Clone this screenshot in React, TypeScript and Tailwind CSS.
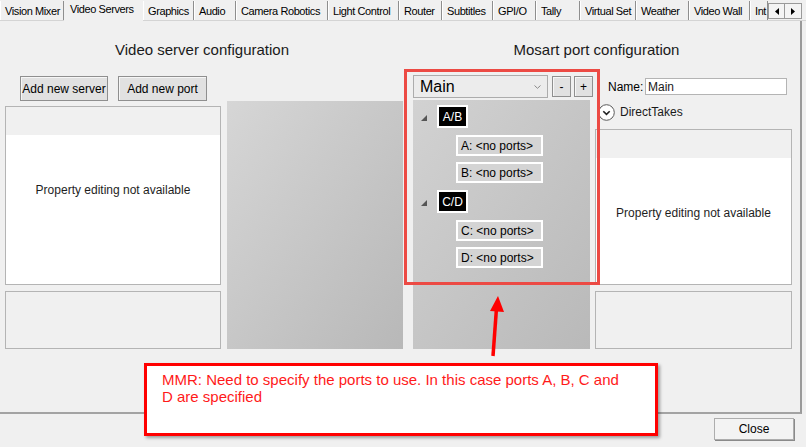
import React from 'react';

const TABS: { label: string; w: number }[] = [
  { label: 'Vision Mixer', w: 64 },
  { label: 'Video Servers', w: 79 },
  { label: 'Graphics', w: 51 },
  { label: 'Audio', w: 42 },
  { label: 'Camera Robotics', w: 92 },
  { label: 'Light Control', w: 71 },
  { label: 'Router', w: 43 },
  { label: 'Subtitles', w: 51 },
  { label: 'GPI/O', w: 43 },
  { label: 'Tally', w: 44 },
  { label: 'Virtual Set', w: 56 },
  { label: 'Weather', w: 53 },
  { label: 'Video Wall', w: 61 },
  { label: 'Int', w: 18 },
];

function TabStrip() {
  return (
    <div className="relative flex h-[21px] items-end border-b border-[#d4d4d4]">
      {TABS.map((t) => {
        const selected = t.label === 'Video Servers';
        return (
          <div
            key={t.label}
            style={{ width: t.w }}
            className={
              selected
                ? 'relative z-10 -mb-px h-[22px] shrink-0 overflow-hidden whitespace-nowrap bg-[#f0f0f0] pl-[6px] pt-[3px] text-[11px] leading-[14px] tracking-[-0.4px] text-black'
                : 'h-[19px] shrink-0 overflow-hidden whitespace-nowrap border-r border-r-[#8e8e8e] border-l border-l-white bg-[#f0f0f0] pl-[4px] pt-[3px] text-[11px] leading-[14px] tracking-[-0.4px] text-black'
            }
          >
            {t.label}
          </div>
        );
      })}
      <div className="mb-[1px] flex h-[16px]">
        <div className="flex w-[17px] items-center justify-center border border-[#9a9a9a] bg-[#f4f4f4]">
          <svg width="4" height="7" viewBox="0 0 4 7"><path d="M4 0 L0 3.5 L4 7 Z" fill="#000" /></svg>
        </div>
        <div className="flex w-[17px] items-center justify-center border border-l-0 border-[#9a9a9a] bg-[#f4f4f4]">
          <svg width="4" height="7" viewBox="0 0 4 7"><path d="M0 0 L4 3.5 L0 7 Z" fill="#000" /></svg>
        </div>
      </div>
    </div>
  );
}

function WinButton({ children, className }: { children: React.ReactNode; className: string }) {
  return (
    <div
      className={`flex items-center justify-center border border-[#8f8f8f] bg-[#e1e1e1] text-[12px] text-black shadow-[inset_1px_1px_0_#f6f6f6] ${className}`}
    >
      {children}
    </div>
  );
}

function PropertyBox({ height }: { height: string }) {
  return (
    <div className={`flex flex-col border border-[#b4b4b4] ${height}`}>
      <div className="h-[28px] shrink-0 bg-[#f0f0f0]" />
      <div className="flex-1 bg-white pt-[47px] text-center text-[12px] leading-[16px] text-[#1e1e1e]">
        Property editing not available
      </div>
    </div>
  );
}

function EmptyBox() {
  return <div className="h-[58px] border border-[#b4b4b4] bg-[#f0f0f0]" />;
}

function GroupNode({ label, mt }: { label: string; mt: string }) {
  return (
    <div className={`flex h-[23px] items-center ${mt}`}>
      <svg width="6" height="6" viewBox="0 0 6 6" className="ml-[8px] mt-[2px]">
        <path d="M6 0 L6 6 L0 6 Z" fill="#555" />
      </svg>
      <div className="ml-[10px] flex h-[23px] w-[31px] items-center justify-center border-2 border-white bg-black text-[12px] text-white">
        {label}
      </div>
    </div>
  );
}

function PortNode({ label, mt }: { label: string; mt: string }) {
  return (
    <div
      className={`ml-[43px] flex h-[21px] w-[87px] items-center border-2 border-white bg-[#d4d4d4] pl-[3px] text-[12px] text-black ${mt}`}
    >
      {label}
    </div>
  );
}

export default function App() {
  return (
    <div className="relative h-[447px] w-[806px] overflow-hidden bg-[#f0f0f0] font-['Liberation_Sans',Arial,sans-serif] text-black">
      <TabStrip />

      {/* Tab page */}
      <div className="flex h-[393px] w-[802px] border-b-2 border-r-2 border-b-[#a3a3a3] border-r-[#9a9a9a]">
        {/* Video server configuration */}
        <div className="ml-[5px] flex w-[398px] flex-col">
          <div className="mt-[19px] h-[20px] pr-[4px] text-center text-[15px] leading-[20px] text-[#1a1a1a]">
            Video server configuration
          </div>
          <div className="mt-[16px] flex items-end gap-[6px]">
            <div className="flex w-[216px] flex-col">
              <div className="flex h-[25px] gap-[10px] pl-[15px]">
                <WinButton className="w-[88px]">Add new server</WinButton>
                <WinButton className="w-[89px]">Add new port</WinButton>
              </div>
              <div className="mt-[5px]">
                <PropertyBox height="h-[179px]" />
              </div>
              <div className="mt-[6px]">
                <EmptyBox />
              </div>
            </div>
            <div className="h-[248px] w-[176px] bg-linear-to-br from-[#d6d6d6] to-[#b8b8b8]" />
          </div>
        </div>

        {/* Mosart port configuration */}
        <div className="ml-[2px] flex flex-1 flex-col">
          <div className="mt-[19px] h-[20px] pr-[12px] text-center text-[15px] leading-[20px] text-[#1a1a1a]">
            Mosart port configuration
          </div>
          <div className="mt-[15px] flex pl-[8px]">
            <div className="flex w-[180px] flex-col">
              <div className="flex h-[23px]">
                <div className="flex h-[23px] w-[135px] items-center justify-between border border-[#acacac] bg-[#ececec] pl-[6px] pr-[6px]">
                  <span className="text-[16px] leading-[20px]">Main</span>
                  <svg width="7" height="4" viewBox="0 0 7 4" className="mt-[1px]">
                    <path d="M0.5 0.5 L3.5 3.3 L6.5 0.5" fill="none" stroke="#8a8a8a" strokeWidth="1" />
                  </svg>
                </div>
                <WinButton className="ml-[4px] mt-[1px] h-[21px] w-[19px] text-[11px]">-</WinButton>
                <WinButton className="ml-[3px] mt-[1px] h-[21px] w-[19px] text-[11px]">+</WinButton>
              </div>
              <div className="mt-[2px] h-[249px] w-[177px] bg-linear-to-br from-[#d2d2d2] to-[#b9b9b9] pt-[5px]">
                <GroupNode label="A/B" mt="" />
                <PortNode label="A: <no ports>" mt="mt-[7px]" />
                <PortNode label="B: <no ports>" mt="mt-[6px]" />
                <GroupNode label="C/D" mt="mt-[7px]" />
                <PortNode label="C: <no ports>" mt="mt-[7px]" />
                <PortNode label="D: <no ports>" mt="mt-[6px]" />
              </div>
            </div>

            <div className="ml-[2px] flex w-[197px] flex-col">
              <div className="mt-[3px] flex h-[17px] items-center">
                <span className="w-[50px] pl-[13px] text-[12px]">Name:</span>
                <div className="flex h-[17px] w-[142px] items-center border border-[#b4b4b4] bg-white pl-[2px] text-[12px] text-[#1a1a1a]">
                  Main
                </div>
              </div>
              <div className="mt-[9px] flex h-[16px] items-center pl-[3px]">
                <svg width="17" height="17" viewBox="0 0 17 17">
                  <circle cx="8.5" cy="8.5" r="7.8" fill="#fff" stroke="#5a5a5a" strokeWidth="1" />
                  <path d="M5.3 7.2 L8.5 10.3 L11.7 7.2" fill="none" stroke="#222" strokeWidth="1.6" />
                </svg>
                <span className="ml-[5px] text-[12px] text-[#1a1a1a]">DirectTakes</span>
              </div>
              <div className="mt-[9px]">
                <PropertyBox height="h-[156px]" />
              </div>
              <div className="mt-[6px]">
                <EmptyBox />
              </div>
            </div>
          </div>
        </div>
      </div>

      {/* Bottom bar */}
      <div className="flex justify-end pr-[12px] pt-[4px]">
        <div className="flex h-[22px] w-[80px] items-center justify-center border border-[#adadad] bg-[#f3f3f3] text-[12px] shadow-[1px_1px_0_#8a8a8a]">
          Close
        </div>
      </div>

      {/* Annotation overlays */}
      <div className="absolute left-[404px] top-[69px] h-[216px] w-[196px] border-[3px] border-[#ec4a44]" />
      <svg className="absolute left-[480px] top-[290px]" width="30" height="70" viewBox="0 0 30 70">
        <path d="M13 66 L16.5 18" stroke="#f00" strokeWidth="3.5" fill="none" />
        <path d="M18 6 L24 22 L10 21 Z" fill="#f00" />
      </svg>
      <div className="absolute left-[144px] top-[363px] h-[73px] w-[514px] border-[3px] border-[#f00] bg-white pl-[15px] pt-[5px] text-[15px] leading-[17px] text-[#ff1a1a] shadow-[2px_2px_3px_rgba(0,0,0,0.35)]">
        MMR: Need to specify the ports to use. In this case ports A, B, C and
        <br />
        D are specified
      </div>
    </div>
  );
}
